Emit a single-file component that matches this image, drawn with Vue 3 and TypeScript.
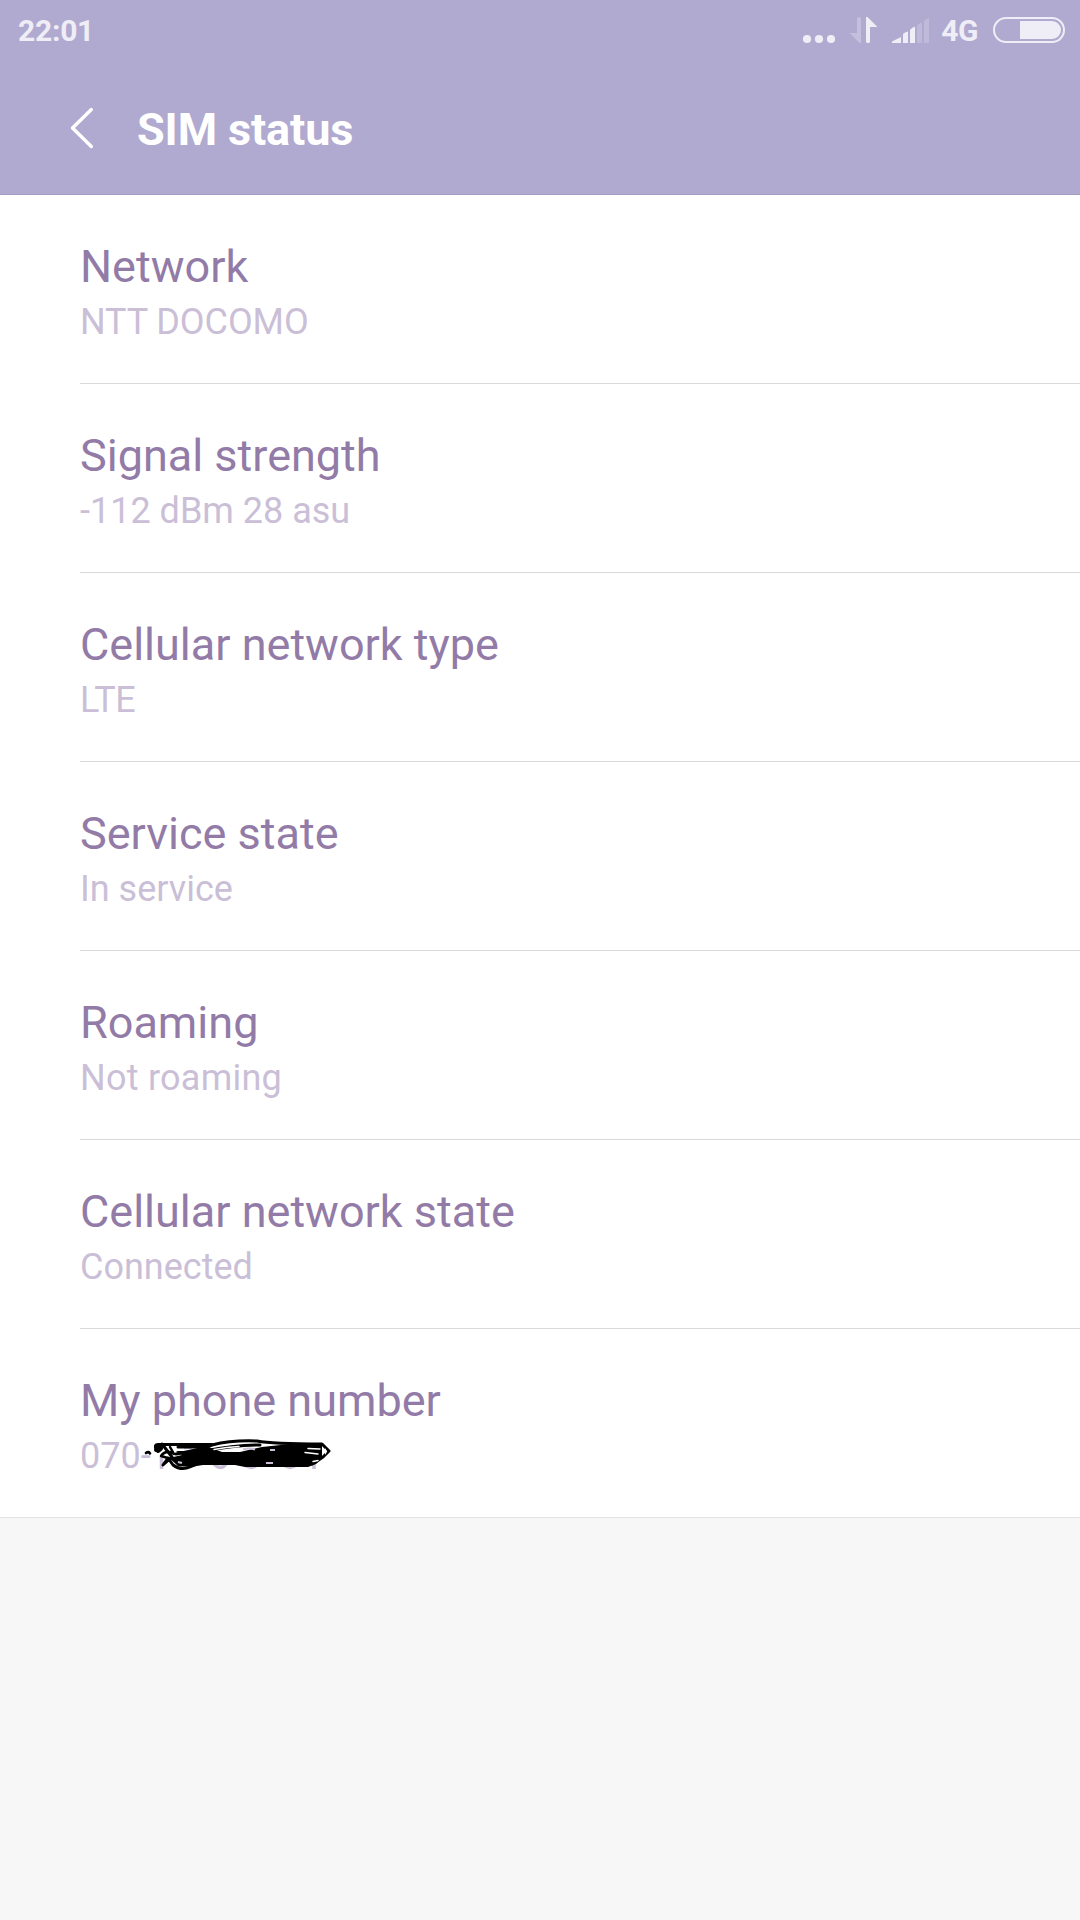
<script setup lang="ts">
interface StatusItem {
  title: string
  value: string
  tracking?: string
  redacted?: boolean
}

const items: StatusItem[] = [
  { title: 'Network', value: 'NTT DOCOMO', tracking: 'tight' },
  { title: 'Signal strength', value: '-112 dBm 28 asu' },
  { title: 'Cellular network type', value: 'LTE', tracking: 'tighter' },
  { title: 'Service state', value: 'In service' },
  { title: 'Roaming', value: 'Not roaming', tracking: 'loose' },
  { title: 'Cellular network state', value: 'Connected' },
  { title: 'My phone number', value: '070-', redacted: true },
]
</script>

<template>
  <div class="screen">
    <header class="header">
      <div class="statusbar">
        <span class="time">22:01</span>
        <div class="indicators">
          <svg class="glyphs" width="130" height="30" viewBox="802 15 130 30">
            <g fill="#efedf6">
              <circle cx="807" cy="39" r="4.1" />
              <circle cx="819" cy="39" r="4.1" />
              <circle cx="831" cy="39" r="4.1" />
              <path d="M866 17h1.5L877 26.5V27H870V41.5Q870 43 868 43Q866 43 866 41.5Z" />
              <path d="M892 43v-1.500L901 37v6Z" />
              <path d="M903 43v-9l2-1.600 3-1v11.600z" />
              <path d="M910 43V30l2-2 3-1.500V43Z" />
            </g>
            <g fill="#c4bfdd">
              <path d="M861 43h-1.500L850 33.500V33H857V18.500Q857 17 859 17Q861 17 861 18.500Z" />
            </g>
            <g fill="#bfb9da">
              <path d="M917 43V25.500l2-1.700 3-1.300V43Z" />
              <path d="M924 43V21l2-1.700 3-1.300V43Z" />
            </g>
          </svg>
          <span class="network">4G</span>
          <svg class="battery" width="72" height="26" viewBox="0 0 72 26">
            <rect x="1" y="1" width="70" height="24" rx="12" fill="none" stroke="#efedf6" stroke-width="2" />
            <path d="M27 4H59a9 9 0 0 1 0 18H27Z" fill="#efedf6" />
          </svg>
        </div>
      </div>
      <div class="titlebar">
        <svg class="back" width="24" height="42" viewBox="0 0 24 42">
          <path d="M21.300 2.500L2.500 21L21.300 39.500" fill="none" stroke="#fff" stroke-width="3.400" stroke-linecap="round" stroke-linejoin="round" />
        </svg>
        <h1 class="heading">SIM status</h1>
      </div>
    </header>
    <main class="list">
      <section v-for="item in items" :key="item.title" class="item">
        <div class="title">{{ item.title }}</div>
        <div class="value" :class="item.tracking">
          {{ item.value }}
          <svg v-if="item.redacted" class="scribble" width="200" height="40" viewBox="140 1432 200 40">
            <g fill="none" stroke="#cabfd7" stroke-width="3.500">
              <path d="M161.500 1456v12M314 1462v6M214 1463q7 7 12 0M245 1464q6 5 12 0M284 1464q6 5 12 0M184 1446.500h8" />
            </g>
            <path d="M176 1450L190 1450L206 1445L222 1451L240 1451L262 1446L290 1443H322V1458L316 1463L308 1466L245 1466L235 1464L203 1464L190 1466L178 1465L169 1457L182 1454Z" fill="#000" />
            <g fill="none" stroke="#000" stroke-width="3" stroke-linecap="round" stroke-linejoin="round">
              <path d="M146 1452q2.500-2 4 0.500" stroke-width="2.600" />
              <path d="M156 1448q-2-4.500 2-4.500H212L198 1446L178 1446" />
              <path d="M156 1449q1-4 4-3t-2 4" stroke-width="4" />
              <path d="M162 1443L172 1456L163 1464L168 1457L173 1464Q181 1470 190 1466L204 1460" />
              <path d="M170 1446L174 1453Q166 1448 161 1455L171 1458" stroke-width="2.500" />
              <path d="M176 1453Q200 1449 212 1444Q232 1439 257 1440Q272 1443 322 1443L329 1450L323 1456L312 1463" />
              <path d="M205 1450Q235 1444 260 1444" />
            </g>
            <path d="M325 1447v7l2.200-3.500Z" fill="#fff" />
            <g fill="none" stroke="#fff" stroke-width="1.400" stroke-linecap="round">
              <path d="M214 1448.500q13-2.500 25-3M308 1447.500l12 0.500M305 1451.500l13 1.500M313 1460.500l5-1" />
            </g>
            <g fill="none" stroke="#cabfd7" stroke-width="2.200">
              <path d="M243 1448.500q6-2 12 0M270 1449h5M178 1461l4 1M266 1462h7" />
            </g>
          </svg>
        </div>
      </section>
    </main>
  </div>
</template>

<style>
body {
  margin: 0;
  background: #f7f7f7;
}
</style>

<style scoped>
.screen {
  width: 1080px;
  height: 1920px;
  overflow: hidden;
  background: #f7f7f7;
  font-family: Roboto, 'Liberation Sans', sans-serif;
}
.header {
  box-sizing: border-box;
  height: 195px;
  background: #b0aad0;
  border-bottom: 1px solid #a39dc3;
  color: #fff;
}
.statusbar {
  display: flex;
  justify-content: space-between;
  height: 60px;
  padding: 0 15px 0 18px;
  color: #efedf6;
  font-weight: 700;
  font-size: 30px;
  line-height: 62px;
}
.time {
  letter-spacing: -0.25px;
}
.indicators {
  display: flex;
  align-items: center;
}
.network {
  margin: 2px 15px 0 9px;
  letter-spacing: -0.5px;
}
.titlebar {
  display: flex;
  align-items: center;
  height: 134px;
  padding-left: 70px;
}
.back {
  margin-top: 2px;
}
.heading {
  margin: 5px 0 0 43px;
  font-size: 45px;
  line-height: 53px;
  font-weight: 700;
  letter-spacing: -0.12px;
}
.list {
  background: #fff;
  border-bottom: 1px solid #e3e3e3;
}
.item {
  box-sizing: border-box;
  height: 189px;
  margin-left: 80px;
  padding-top: 45px;
  border-bottom: 1px solid #d9d9d9;
}
.item:last-child {
  height: 188px;
  border-bottom: 0;
}
.title {
  color: #927ba7;
  font-size: 45px;
  line-height: 53px;
}
.value {
  position: relative;
  margin-top: 8px;
  color: #cabfd7;
  font-size: 36px;
  line-height: 42px;
}
.tight {
  letter-spacing: -0.08px;
}
.tighter {
  letter-spacing: -0.4px;
}
.loose {
  letter-spacing: 0.25px;
}
.scribble {
  position: absolute;
  left: 60px;
  top: -2px;
}
</style>
